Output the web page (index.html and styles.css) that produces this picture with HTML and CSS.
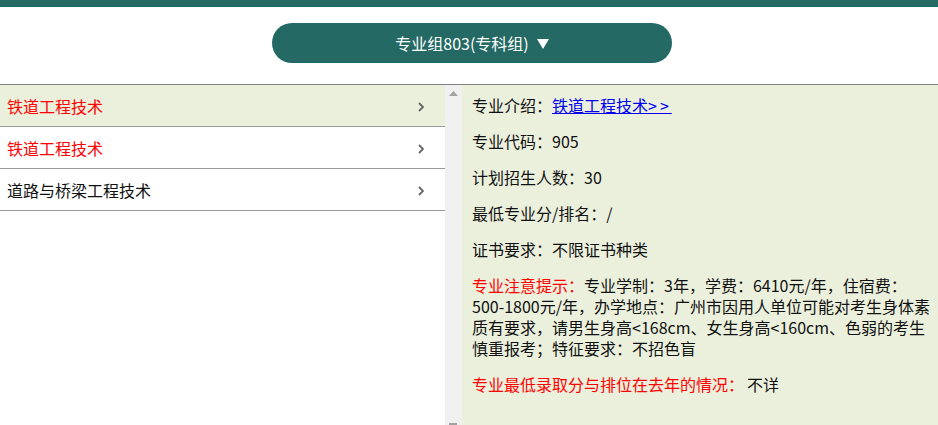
FILE: index.html
```html
<!DOCTYPE html>
<html lang="zh-CN">
<head>
<meta charset="utf-8">
<title>专业组</title>
<link rel="stylesheet" href="styles.css">
</head>
<body>
<div class="topbar"></div>
<header class="header">
  <button class="group-btn">专业组803(专科组)<svg class="caret" width="12" height="10" viewBox="0 0 12 10"><polygon points="0,0 12,0 6,10" fill="#fff"/></svg></button>
</header>
<main class="main">
  <div class="list-wrap">
    <ul class="list">
      <li class="item active red"><span>铁道工程技术</span><svg class="chev" width="6" height="10" viewBox="0 0 6 10"><polyline points="1,1 5,5 1,9" fill="none" stroke="#666" stroke-width="1.8"/></svg></li>
      <li class="item red"><span>铁道工程技术</span><svg class="chev" width="6" height="10" viewBox="0 0 6 10"><polyline points="1,1 5,5 1,9" fill="none" stroke="#666" stroke-width="1.8"/></svg></li>
      <li class="item"><span>道路与桥梁工程技术</span><svg class="chev" width="6" height="10" viewBox="0 0 6 10"><polyline points="1,1 5,5 1,9" fill="none" stroke="#666" stroke-width="1.8"/></svg></li>
    </ul>
    <div class="scrollbar"><svg class="sb-up" width="9" height="5" viewBox="0 0 9 5"><polygon points="0,5 9,5 4.5,0" fill="#a3a3a3"/></svg><div class="sb-down"></div></div>
  </div>
  <section class="detail">
    <p>专业介绍：<a href="#" class="link">铁道工程技术<span class="gt">&gt;&gt;</span></a></p>
    <p>专业代码：905</p>
    <p>计划招生人数：30</p>
    <p>最低专业分/排名：/</p>
    <p>证书要求：不限证书种类</p>
    <p><span class="red">专业注意提示：</span>专业学制：3年，学费：6410元/年，住宿费：500-1800元/年，办学地点：广州市因用人单位可能对考生身体素质有要求，请男生身高&lt;168cm、女生身高&lt;160cm、色弱的考生慎重报考；特征要求：不招色盲</p>
    <p><span class="red">专业最低录取分与排位在去年的情况：</span><span class="val">不详</span></p>
  </section>
</main>
</body>
</html>
```
FILE: styles.css
```css
* { box-sizing: border-box; }
html, body { margin: 0; padding: 0; }
body {
  font-family: "Noto Sans CJK SC", "Noto Sans", sans-serif;
  font-size: 16px;
  color: #111;
  background: #fff;
  width: 938px;
  height: 425px;
  overflow: hidden;
}
.topbar { height: 7px; background: #246963; }
.header {
  height: 78px;
  border-bottom: 1px solid #808080;
  display: flex;
  justify-content: center;
  padding: 16px 0 0 6px;
}
.group-btn {
  width: 400px;
  height: 40px;
  border: none;
  border-radius: 20px;
  background: #246963;
  color: #fff;
  font-family: inherit;
  font-size: 16px;
  display: flex;
  align-items: center;
  justify-content: center;
  gap: 8px;
  padding: 0;
}
.caret { display: block; margin-top: 1px; }
.main { display: flex; height: 340px; }
.list-wrap { display: flex; width: 462px; flex: none; }
.list { list-style: none; margin: 0; padding: 0; width: 445px; }
.item {
  height: 42px;
  border-bottom: 1px solid #999;
  display: flex;
  align-items: center;
  justify-content: space-between;
  padding: 0 21px 0 7px;
  line-height: 20px;
}
.item.active { background: #ebf0dd; }
.item.red { color: #ff0000; }
.chev { display: block; margin-top: 2px; }
.scrollbar {
  width: 17px;
  background: #f0f0f0;
  display: flex;
  flex-direction: column;
  align-items: center;
  justify-content: space-between;
  padding: 6px 0 0;
}
.sb-up { display: block; }
.sb-down { width: 8px; height: 2px; background: #a3a3a3; margin-right: 1px; }
.detail {
  flex: 1;
  background: #ebf0dd;
  padding: 10px 2px 0 10px;
  line-height: 21px;
}
.detail p { margin: 0 0 15px; }
.red { color: #ff0000; }
.val { padding-left: 3px; }
.link { color: #0000ee; text-decoration: underline; }
.gt { letter-spacing: 3px; }
```
